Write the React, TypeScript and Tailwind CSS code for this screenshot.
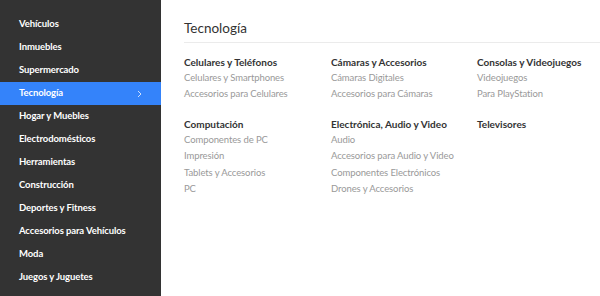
const menu = [
  "Vehículos",
  "Inmuebles",
  "Supermercado",
  "Tecnología",
  "Hogar y Muebles",
  "Electrodomésticos",
  "Herramientas",
  "Construcción",
  "Deportes y Fitness",
  "Accesorios para Vehículos",
  "Moda",
  "Juegos y Juguetes",
];

const groups = [
  {
    title: "Celulares y Teléfonos",
    items: ["Celulares y Smartphones", "Accesorios para Celulares"],
  },
  {
    title: "Cámaras y Accesorios",
    items: ["Cámaras Digitales", "Accesorios para Cámaras"],
  },
  {
    title: "Consolas y Videojuegos",
    items: ["Videojuegos", "Para PlayStation"],
  },
  {
    title: "Computación",
    items: ["Componentes de PC", "Impresión", "Tablets y Accesorios", "PC"],
  },
  {
    title: "Electrónica, Audio y Video",
    items: [
      "Audio",
      "Accesorios para Audio y Video",
      "Componentes Electrónicos",
      "Drones y Accesorios",
    ],
  },
  { title: "Televisores", items: [] },
];

export default function App() {
  return (
    <main className="flex h-[296px] w-[600px] overflow-hidden bg-white font-['Lato',sans-serif]">
      <nav className="flex w-[161px] shrink-0 flex-col bg-[#333333] pt-[13px]">
        {menu.map((m) => (
          <div
            key={m}
            className={`flex h-[23px] items-center justify-between pl-[19px] pr-[19px] text-[9.5px] font-bold tracking-[-0.1px] text-white ${
              m === "Tecnología" ? "bg-[#3483fa]" : ""
            }`}
          >
            <span>{m}</span>
            {m === "Tecnología" && (
              <svg width="5" height="8" viewBox="0 0 5 8">
                <path d="M1 1l3 3-3 3" fill="none" stroke="#cfe0fb" strokeWidth="1" />
              </svg>
            )}
          </div>
        ))}
      </nav>
      <section className="flex-1 pl-[23px] pt-[19px]">
        <h1 className="text-[13.5px] leading-[18px] text-[#333333]">Tecnología</h1>
        <div className="mt-[5px] h-px bg-[#ebebeb]" />
        <div className="grid grid-cols-[147px_146px_1fr] gap-y-[14px] pt-[12px]">
          {groups.map((g) => (
            <div key={g.title} className="flex flex-col">
              <h2 className="text-[10px] font-bold leading-[15px] text-[#333333]">{g.title}</h2>
              {g.items.map((i) => (
                <span key={i} className="text-[9.5px] leading-[16.4px] tracking-[-0.1px] text-[#999999]">
                  {i}
                </span>
              ))}
            </div>
          ))}
        </div>
      </section>
    </main>
  );
}
